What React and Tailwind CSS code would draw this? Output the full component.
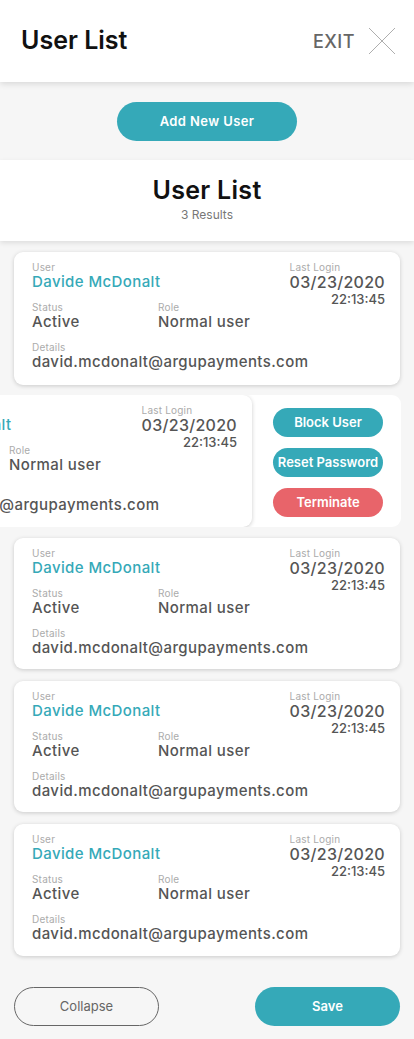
import React from "react";

const font = { fontFamily: "Inter, 'Noto Sans', sans-serif" };

function CardBody() {
  return (
    <div className="flex pl-[18px] pr-[15px] pt-[9px] pb-[12px]">
      <div className="flex-1 min-w-0 flex flex-col">
        <div className="text-[10px] leading-[12px] text-[#ababab] tracking-[0.2px]">User</div>
        <div className="text-[15px] leading-[18px] font-medium text-[#35a9b8] tracking-[0.4px] whitespace-nowrap">Davide McDonalt</div>
        <div className="flex mt-[10px]">
          <div className="w-[126px] flex flex-col">
            <div className="text-[10px] leading-[12px] text-[#ababab] tracking-[0.2px]">Status</div>
            <div className="text-[15px] leading-[18px] font-medium text-[#555] tracking-[0.4px]">Active</div>
          </div>
          <div className="flex flex-col">
            <div className="text-[10px] leading-[12px] text-[#ababab] tracking-[0.2px]">Role</div>
            <div className="text-[15px] leading-[18px] font-medium text-[#555] tracking-[0.4px] whitespace-nowrap">Normal user</div>
          </div>
        </div>
        <div className="text-[10px] leading-[12px] text-[#ababab] mt-[10px] tracking-[0.2px]">Details</div>
        <div className="text-[15px] leading-[18px] font-medium text-[#555] whitespace-nowrap tracking-[0.4px]">david.mcdonalt@argupayments.com</div>
      </div>
      <div className="shrink-0 flex flex-col items-end">
        <div className="self-start text-[10px] leading-[12px] text-[#ababab] tracking-[0.2px]">Last Login</div>
        <div className="text-[16px] leading-[19px] font-medium text-[#555] tracking-[0.3px]">03/23/2020</div>
        <div className="text-[13px] leading-[15px] font-medium text-[#555]">22:13:45</div>
      </div>
    </div>
  );
}

function Card({ h = "h-[131px]" }) {
  return (
    <div className={"mx-[14px] bg-white rounded-[9px] shadow-[0_1px_4px_rgba(0,0,0,0.18)] " + h}>
      <CardBody />
    </div>
  );
}

function SwipedRow() {
  return (
    <div className="relative mr-[13px] h-[132px] bg-white rounded-r-[9px] overflow-hidden">
      <div className="absolute top-0 left-[-135px] w-[387px] h-[132px] bg-white rounded-[9px] shadow-[0_1px_4px_rgba(0,0,0,0.2)]">
        <CardBody />
      </div>
      <div className="absolute right-[18px] top-[13px] flex flex-col gap-[11px]">
        <button className="w-[110px] h-[29px] rounded-full bg-[#35a9b8] text-white text-[13px] font-semibold">Block User</button>
        <button className="w-[110px] h-[29px] rounded-full bg-[#35a9b8] text-white text-[13px] font-semibold whitespace-nowrap">Reset Password</button>
        <button className="w-[110px] h-[29px] rounded-full bg-[#e8646a] text-white text-[13px] font-semibold">Terminate</button>
      </div>
    </div>
  );
}

export default function App() {
  return (
    <div style={font} className="w-[414px] min-h-[1039px] bg-[#f6f6f6] overflow-hidden">
      <header className="relative z-10 h-[82px] bg-white flex items-center justify-between pl-[21px] pr-[18px] shadow-[0_2px_6px_rgba(0,0,0,0.12)]">
        <h1 className="text-[25px] font-semibold text-[#111]">User List</h1>
        <div className="flex items-center gap-[13px]">
          <span className="text-[18px] font-medium text-[#666] tracking-[0.5px]">EXIT</span>
          <svg width="28" height="28" viewBox="0 0 28 28">
            <path d="M1 1 L27 27 M27 1 L1 27" stroke="#999" strokeWidth="0.8" fill="none" />
          </svg>
        </div>
      </header>
      <div className="flex justify-center pt-[20px] pb-[19px]">
        <button className="w-[180px] h-[39px] rounded-full bg-[#35a9b8] text-white text-[13px] font-semibold tracking-[0.4px]">Add New User</button>
      </div>
      <section className="h-[81px] bg-white flex flex-col items-center pt-[15px] shadow-[0_2px_5px_rgba(0,0,0,0.1)]">
        <h2 className="text-[25px] leading-[30px] font-semibold text-[#111] tracking-[0.3px]">User List</h2>
        <p className="text-[12px] leading-[15px] text-[#777] mt-[2px]">3 Results</p>
      </section>
      <div className="flex flex-col pt-[11px]">
        <Card h="h-[133px]" />
        <div className="h-[10px]" />
        <SwipedRow />
        <div className="h-[11px]" />
        <Card />
        <div className="h-[12px]" />
        <Card />
        <div className="h-[12px]" />
        <Card h="h-[132px]" />
      </div>
      <div className="flex justify-between px-[14px] pt-[31px] pb-[14px]">
        <button className="w-[145px] h-[39px] rounded-full border border-[#666] text-[#666] text-[13px]">Collapse</button>
        <button className="w-[145px] h-[39px] rounded-full bg-[#35a9b8] text-white text-[13px] font-semibold">Save</button>
      </div>
    </div>
  );
}
